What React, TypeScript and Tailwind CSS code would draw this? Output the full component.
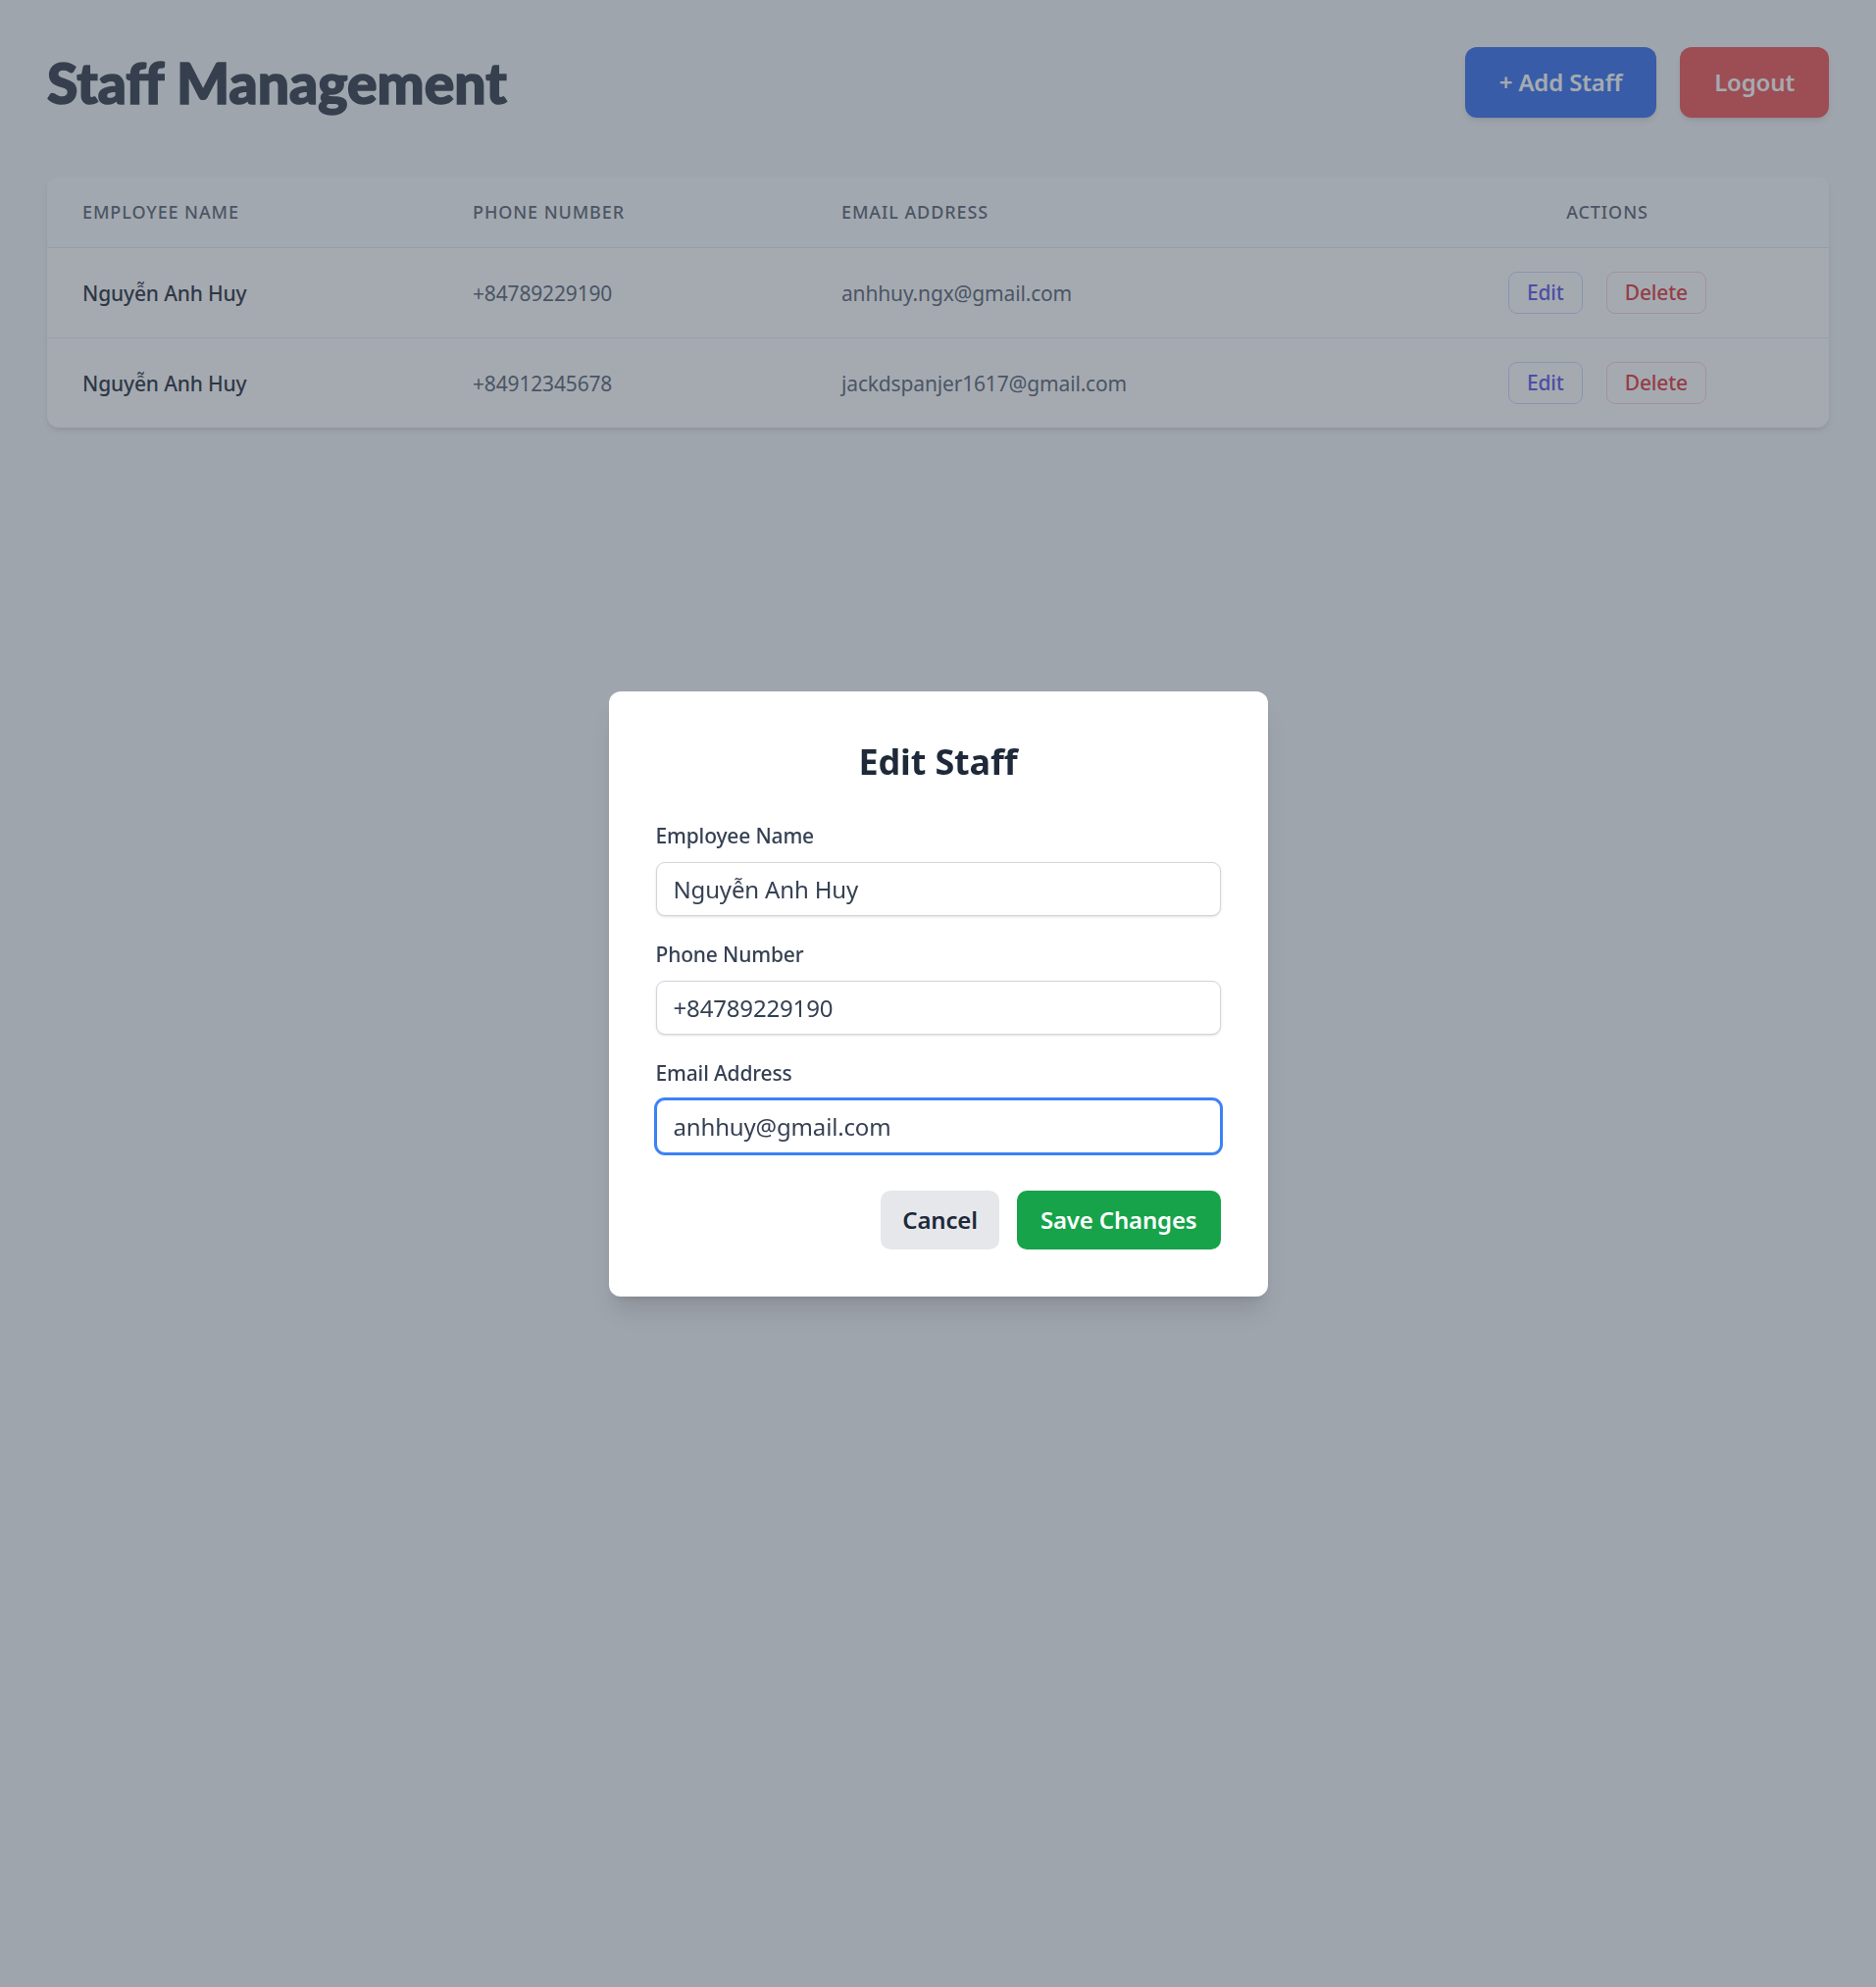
import React from 'react';

interface Staff {
  name: string;
  phone: string;
  email: string;
}

const staffList: Staff[] = [
  { name: 'Nguyễn Anh Huy', phone: '+84789229190', email: 'anhhuy.ngx@gmail.com' },
  { name: 'Nguyễn Anh Huy', phone: '+84912345678', email: 'jackdspanjer1617@gmail.com' },
];

const Field: React.FC<{ label: string; value: string; focused?: boolean; last?: boolean }> = ({ label, value, focused, last }) => (
  <div className={last ? '' : 'mb-6'}>
    <label className="block text-[21px] leading-[30px] font-medium text-gray-700 mb-3">{label}</label>
    <input
      defaultValue={value}
      className={
        focused
          ? 'w-full h-[55px] px-[17px] rounded-[9px] border border-[#3b82f6] ring-2 ring-[#3b82f6] text-[24px] text-gray-700 bg-white outline-none'
          : 'w-full h-[55px] px-[17px] rounded-[9px] border border-gray-300 text-[24px] text-gray-700 bg-white shadow-sm outline-none'
      }
    />
  </div>
);

export default function App() {
  return (
    <div className="min-h-screen bg-gray-100 p-12 font-['Noto_Sans',sans-serif] tracking-[-0.01em]">
      <div className="flex items-center justify-between mb-[60px]">
        <h1 className="text-[57px] leading-[60px] font-black text-[#1f2937] font-['Lato',sans-serif] tracking-normal [-webkit-text-stroke:1.6px_#1f2937]">
          Staff Management
        </h1>
        <div className="flex gap-6">
          <button className="h-[72px] px-[35px] rounded-xl bg-[#2563eb] text-white text-[24px] font-semibold shadow-md">
            + Add Staff
          </button>
          <button className="h-[72px] px-[35px] rounded-xl bg-[#ef4444] text-white text-[24px] font-semibold shadow-md">
            Logout
          </button>
        </div>
      </div>

      <div className="bg-white rounded-xl shadow-md overflow-hidden">
        <table className="w-full table-fixed">
          <colgroup>
            <col className="w-[398px]" />
            <col className="w-[376px]" />
            <col className="w-[590px]" />
            <col className="w-[454px]" />
          </colgroup>
          <thead className="bg-gray-50 border-b border-gray-200">
            <tr>
              <th className="px-9 py-6 text-left text-[18px] leading-[24px] font-medium uppercase tracking-wider text-gray-600">Employee Name</th>
              <th className="px-9 py-6 text-left text-[18px] leading-[24px] font-medium uppercase tracking-wider text-gray-600">Phone Number</th>
              <th className="px-9 py-6 text-left text-[18px] leading-[24px] font-medium uppercase tracking-wider text-gray-600">Email Address</th>
              <th className="px-9 py-6 text-center text-[18px] leading-[24px] font-medium uppercase tracking-wider text-gray-600">Actions</th>
            </tr>
          </thead>
          <tbody className="divide-y divide-gray-200">
            {staffList.map((s, i) => (
              <tr key={i}>
                <td className="px-9 py-6 text-[21px] leading-[30px] font-medium text-gray-900">{s.name}</td>
                <td className="px-9 py-6 text-[21px] leading-[30px] text-gray-600">{s.phone}</td>
                <td className="px-9 py-6 text-[21px] leading-[30px] text-gray-600">{s.email}</td>
                <td className="px-9 py-6">
                  <div className="flex justify-center gap-6">
                    <button className="h-[43px] px-[18px] rounded-[9px] border border-[#c7d2fe] text-[#4f46e5] text-[21px] font-medium">
                      Edit
                    </button>
                    <button className="h-[43px] px-[18px] rounded-[9px] border border-[#fecaca] text-[#dc2626] text-[21px] font-medium">
                      Delete
                    </button>
                  </div>
                </td>
              </tr>
            ))}
          </tbody>
        </table>
      </div>

      <div className="fixed inset-0 bg-[#4b5563]/50 flex items-center justify-center">
        <div className="w-[672px] bg-white rounded-xl shadow-xl p-12">
          <h2 className="text-[36px] leading-[48px] font-bold text-center text-gray-800 mb-9">Edit Staff</h2>
          <Field label="Employee Name" value="Nguyễn Anh Huy" />
          <Field label="Phone Number" value="+84789229190" />
          <Field label="Email Address" value="anhhuy@gmail.com" focused last />
          <div className="flex justify-end gap-[18px] mt-[38px]">
            <button className="h-[60px] px-[22px] rounded-[10px] bg-gray-200 text-gray-800 text-[24px] font-semibold">Cancel</button>
            <button className="h-[60px] px-6 rounded-[10px] bg-[#16a34a] text-white text-[24px] font-semibold">Save Changes</button>
          </div>
        </div>
      </div>
    </div>
  );
}
